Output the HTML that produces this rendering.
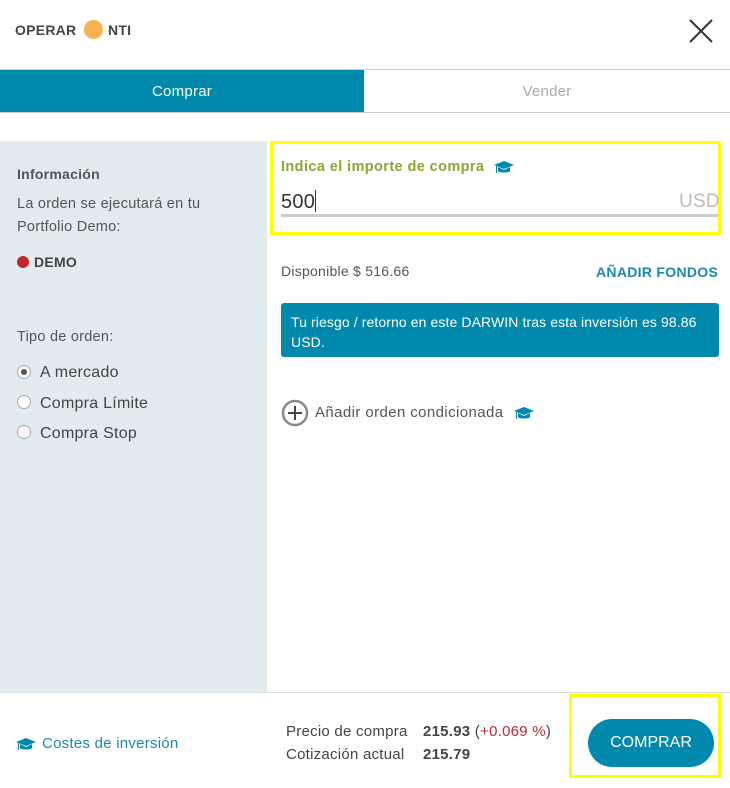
<!DOCTYPE html>
<html><head><meta charset="utf-8"><style>
*{margin:0;padding:0;box-sizing:border-box}
body{width:730px;height:788px;background:#fff;font-family:"Liberation Sans",sans-serif;color:#555;position:relative;overflow:hidden;font-size:14px}
.a{position:absolute;white-space:nowrap;letter-spacing:0.25px}
.cap{fill:#0089ad}
</style></head><body>
<div class="a" style="left:15px;top:22px;font-size:14px;font-weight:bold;color:#444">OPERAR</div>
<div class="a" style="left:84px;top:20px;width:19px;height:19px;border-radius:50%;background:#f5b153"></div>
<div class="a" style="left:108px;top:22px;font-size:14px;font-weight:bold;color:#444">NTI</div>
<svg class="a" style="left:688px;top:18px" width="26" height="26"><path d="M2 2L24 24M24 2L2 24" stroke="#333" stroke-width="2"/></svg>
<div class="a" style="left:0;top:69px;width:730px;height:1px;background:#ccc"></div>
<div class="a" style="left:0;top:70px;width:364px;height:42px;background:#0089ad;color:#fff;font-size:15px;text-align:center;line-height:44px">Comprar</div>
<div class="a" style="left:364px;top:70px;width:366px;height:42px;color:#aaa;font-size:15px;text-align:center;line-height:44px">Vender</div>
<div class="a" style="left:0;top:112px;width:730px;height:1px;background:#ccc"></div>
<div class="a" style="left:0;top:141px;width:267px;height:551px;background:#e1ebf0;border-top:1px solid #eee"></div>
<div class="a" style="left:17px;top:166px;font-weight:bold;font-size:14px;color:#555">Información</div>
<div class="a" style="left:17px;top:193px;font-size:14.5px;line-height:23px">La orden se ejecutará en tu<br>Portfolio Demo:</div>
<div class="a" style="left:17px;top:256px;width:12px;height:12px;border-radius:50%;background:#c0282d"></div>
<div class="a" style="left:34px;top:254px;font-weight:bold;color:#444">DEMO</div>
<div class="a" style="left:17px;top:329px;font-size:14.5px">Tipo de orden:</div>
<div class="a" style="left:17px;top:365px;width:14px;height:14px;border-radius:50%;border:1px solid #aaa;background:#fff"><div style="margin:3px;width:6px;height:6px;border-radius:50%;background:#555"></div></div>
<div class="a" style="left:40px;top:364px;font-size:16px;color:#444">A mercado</div>
<div class="a" style="left:17px;top:395px;width:14px;height:14px;border-radius:50%;border:1px solid #aaa;background:#fff"></div>
<div class="a" style="left:40px;top:395px;font-size:16px;color:#444">Compra Límite</div>
<div class="a" style="left:17px;top:425px;width:14px;height:14px;border-radius:50%;border:1px solid #aaa;background:#fff"></div>
<div class="a" style="left:40px;top:425px;font-size:16px;color:#444">Compra Stop</div>

<div class="a" style="left:270px;top:141px;width:451px;height:94px;border:3px solid #ffff00"></div>
<div class="a" style="left:281px;top:159px;font-size:14.5px;font-weight:bold;color:#88a832;letter-spacing:0.4px">Indica el importe de compra</div>
<svg class="a" style="left:494px;top:160px" width="20" height="16" viewBox="0 0 20 16"><path class="cap" d="M10 1L20 5L10 9L0 5Z M4 7V11C4 13 16 13 16 11V7L10 10Z M2 6V13H3V6Z"/></svg>
<div class="a" style="left:281px;top:190px;font-size:20px;color:#333">500<span style="display:inline-block;width:1px;height:22px;background:#333;vertical-align:-4px"></span></div>
<div class="a" style="left:679px;top:191px;font-size:19px;color:#bbb">USD</div>
<div class="a" style="left:281px;top:214px;width:437px;height:3px;background:#ccc"></div>
<div class="a" style="left:281px;top:263px">Disponible $ 516.66</div>
<div class="a" style="left:596px;top:264px;font-weight:bold;color:#1a88ad;letter-spacing:0.3px">AÑADIR FONDOS</div>
<div class="a" style="left:281px;top:303px;width:438px;height:54px;background:#0089ad;border-radius:3px;color:#fff;font-size:14px;line-height:20px;padding:9px 10px;white-space:normal;letter-spacing:0.1px">Tu riesgo / retorno en este DARWIN tras esta inversión es 98.86 USD.</div>
<svg class="a" style="left:281px;top:399px" width="28" height="28"><circle cx="14" cy="14" r="12" fill="none" stroke="#888" stroke-width="2.5"/><path d="M14 7V21M7 14H21" stroke="#444" stroke-width="2"/></svg>
<div class="a" style="left:315px;top:404px;font-size:15px;letter-spacing:0.4px">Añadir orden condicionada</div>
<svg class="a" style="left:514px;top:406px" width="20" height="16" viewBox="0 0 20 16"><path class="cap" d="M10 1L20 5L10 9L0 5Z M4 7V11C4 13 16 13 16 11V7L10 10Z M2 6V13H3V6Z"/></svg>

<div class="a" style="left:0;top:692px;width:730px;height:1px;background:#ddd"></div>
<svg class="a" style="left:16px;top:737px" width="20" height="16" viewBox="0 0 20 16"><path class="cap" d="M10 1L20 5L10 9L0 5Z M4 7V11C4 13 16 13 16 11V7L10 10Z M2 6V13H3V6Z"/></svg>
<div class="a" style="left:42px;top:735px;font-size:15px;color:#1a88ad">Costes de inversión</div>
<div class="a" style="left:286px;top:723px;font-size:15px;color:#444">Precio de compra</div>
<div class="a" style="left:423px;top:723px;font-size:15px;color:#444"><b>215.93</b> (<span style="color:#c0282d">+0.069 %</span>)</div>
<div class="a" style="left:286px;top:746px;font-size:15px;color:#444">Cotización actual</div>
<div class="a" style="left:423px;top:746px;font-size:15px;color:#444;font-weight:bold">215.79</div>
<div class="a" style="left:569px;top:694px;width:152px;height:84px;border:3px solid #ffff00"></div>
<div class="a" style="left:588px;top:719px;width:126px;height:48px;border-radius:24px;background:#0089ad;color:#fff;font-size:16px;text-align:center;line-height:48px;letter-spacing:0">COMPRAR</div>
</body></html>
